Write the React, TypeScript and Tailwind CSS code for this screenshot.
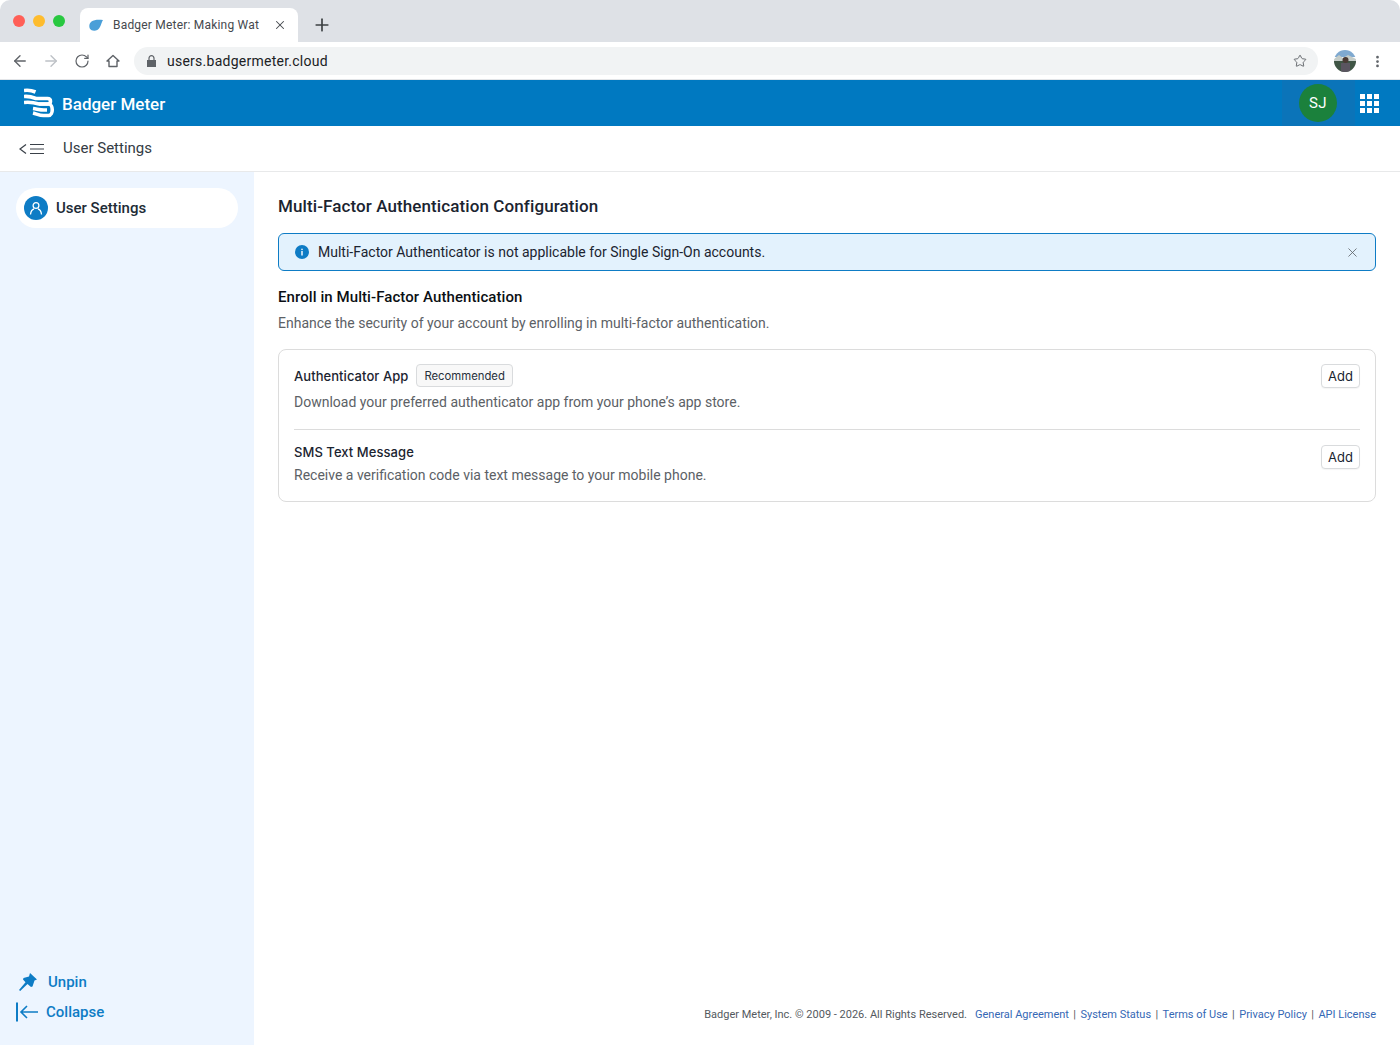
import { Star, ArrowLeft, ArrowRight, RotateCw, X, Plus, EllipsisVertical } from "lucide-react";

const roboto = "font-['Roboto',sans-serif]";
const inter = "font-['Inter',sans-serif]";

function BadgerLogo() {
  return (
    <svg width="31" height="31" viewBox="0 0 31 31" fill="none" stroke="white" strokeWidth="3.600">
      <path d="M0 2.500C4 2 8 2.500 11.500 4" />
      <path d="M0 8.500C5 8 8 9 12 10.500H23.500C27.500 10.500 27.500 16 23.500 16H15" />
      <path d="M0 14.500C5 14 10 14.500 15 16H24.500C29.500 16 29.500 27.500 24.500 27.500H19.500C15.500 27.500 13 26 9 25" />
      <path d="M9 20.500C13 21 16 22 20 22H23" />
    </svg>
  );
}

function BrowserChrome() {
  return (
    <div className={`h-20 shrink-0 flex flex-col ${roboto}`}>
      <div className="h-[42px] bg-[#dee1e6] rounded-t-[10px] flex items-end">
        <div className="flex gap-2 pl-[13px] self-start pt-[15px]">
          <span className="w-3 h-3 rounded-full bg-[#ff5f57]" />
          <span className="w-3 h-3 rounded-full bg-[#febc2e]" />
          <span className="w-3 h-3 rounded-full bg-[#28c840]" />
        </div>
        <div className="ml-[15px] w-[218px] h-[34px] bg-white rounded-t-[8px] flex items-center pl-[9px] pr-[11px]">
          <svg width="14" height="12" viewBox="0 0 14 12" fill="#4a9fd8">
            <path d="M14 1C10 .3 5 .5 2.500 2.500.5 4-.3 7 .8 9.500c1.500 2.500 5 2.800 7.500 1.500C11.500 9.300 12 4.500 14 1z" />
          </svg>
          <span className="ml-[10px] flex-1 text-[12px] tracking-[0.2px] text-[#45494e] whitespace-nowrap">Badger Meter: Making Wat</span>
          <X size={14} strokeWidth={1.8} className="text-[#45494e]" />
        </div>
        <Plus size={20} strokeWidth={2} className="ml-[14px] mb-[7px] text-[#3c4043]" />
      </div>
      <div className="h-[38px] pt-px bg-white border-b border-[#e3e5e8] flex items-center">
        <div className="flex items-center pl-[11px] gap-[13px] text-[#5f6368]">
          <ArrowLeft size={18} strokeWidth={1.8} />
          <ArrowRight size={18} strokeWidth={1.8} className="text-[#bdc1c6]" />
          <RotateCw size={16} strokeWidth={1.8} className="mx-px" />
          <svg width="16" height="16" viewBox="0 0 16 16" fill="none" stroke="currentColor" strokeWidth="1.400" className="mx-px">
            <path d="M8 2.500 2 8h2v5.500h8V8h2z" strokeLinejoin="round" />
          </svg>
        </div>
        <div className="ml-[12px] w-[1184px] h-7 rounded-full bg-[#f1f3f4] flex items-center pl-[13px] pr-[11px]">
          <svg width="9" height="12" viewBox="0 0 9 12" fill="#5f6368">
            <path d="M0 5h9v7H0z" />
            <path d="M2 5V3.200a2.500 2.500 0 0 1 5 0V5" fill="none" stroke="#5f6368" strokeWidth="1.200" />
          </svg>
          <span className="ml-[11px] flex-1 text-[14px] tracking-[0.25px] text-[#202124]">users.badgermeter.cloud</span>
          <Star size={14} strokeWidth={1.6} className="text-[#5f6368]" />
        </div>
        <svg width="22" height="22" viewBox="0 0 22 22" className="ml-[16px] shrink-0">
          <defs>
            <clipPath id="avatar-clip"><circle cx="11" cy="11" r="11" /></clipPath>
          </defs>
          <g clipPath="url(#avatar-clip)">
            <rect width="22" height="7" fill="#7fa9d0" />
            <path d="M0 9 5 5l4 3 5-3 8 4v4H0z" fill="#c4ccc8" />
            <rect y="11" width="22" height="11" fill="#3f5545" />
            <circle cx="11.500" cy="10" r="3" fill="#4a3a34" />
            <rect x="7" y="13" width="9" height="9" fill="#5a5560" />
          </g>
        </svg>
        <EllipsisVertical size={15} strokeWidth={2.4} className="ml-[13.500px] text-[#5f6368]" />
      </div>
    </div>
  );
}

function AppHeader() {
  return (
    <header className={`h-[46px] shrink-0 bg-[#0079c1] flex items-center pl-6 ${roboto}`}>
      <BadgerLogo />
      <span className="ml-[7px] mt-[3px] text-[17px] font-medium text-white">Badger Meter</span>
      <div className="ml-auto h-full w-[73px] pr-px bg-[#0b74b9] flex items-center justify-center">
        <div className="w-[38px] h-[38px] rounded-full bg-[#1b813c] flex items-center justify-center text-[15px] text-white tracking-[0.3px]">SJ</div>
      </div>
      <div className="grid grid-cols-3 gap-[2px] ml-[5px] mr-[21px]">
        {Array.from({ length: 9 }).map((_, i) => (
          <span key={i} className="w-[5px] h-[5px] bg-white" />
        ))}
      </div>
    </header>
  );
}

function Sidebar() {
  return (
    <aside className={`w-[254px] shrink-0 bg-[#edf5ff] flex flex-col justify-between pt-4 pb-[18px] pl-4 pr-4 ${roboto}`}>
      <div className="h-10 rounded-full bg-white flex items-center pl-2">
        <div className="w-6 h-6 rounded-full bg-[#0e7cc5] flex items-center justify-center">
          <svg width="14" height="14" viewBox="0 0 14 14" fill="none" stroke="white" strokeWidth="1.300">
            <circle cx="7" cy="4.500" r="2.900" />
            <path d="M1.500 13.500c.3-3 1.500-5 3.500-5.500M12.500 13.500c-.3-3-1.500-5-3.500-5.500" />
          </svg>
        </div>
        <span className="ml-2 text-[15px] font-medium text-[#212b36]">User Settings</span>
      </div>
      <div className="flex flex-col text-[15px] font-medium text-[#0e7cc5]">
        <div className="h-[30px] flex items-center pl-[3px]">
          <svg width="18" height="18" viewBox="0 0 18 18" fill="#0e7cc5">
            <path d="M11 0 18 6.500 15.500 7.500 13.500 13.500 12 14 8.500 11 1.200 18 0 17 6.500 9.300 4 6.500 4.500 5 10 3.500z" />
          </svg>
          <span className="ml-[11px]">Unpin</span>
        </div>
        <div className="h-[30px] flex items-center">
          <svg width="23" height="20" viewBox="0 0 23 20" fill="none" stroke="#0e7cc5">
            <path d="M1 0.500v19" strokeWidth="2" />
            <path d="M22 10H5.500M11 4 5 10l6 6" strokeWidth="1.600" />
          </svg>
          <span className="ml-[7px]">Collapse</span>
        </div>
      </div>
    </aside>
  );
}

function MethodRow({ title, desc, badge, className }: { title: string; desc: string; badge?: string; className: string }) {
  return (
    <div className={`flex justify-between ${className}`}>
      <div>
        <div className="h-[23px] flex items-center">
          <span className={`text-[13px] tracking-[0.06px] font-medium text-[#1b2430] ${inter}`}>{title}</span>
          {badge && (
            <span className={`ml-2 h-[23px] px-[7px] flex items-center rounded-[4px] border border-[#d9dbdd] bg-[#f8f8f8] text-[11.300px] text-[#27303b] ${inter}`}>
              {badge}
            </span>
          )}
        </div>
        <p className={`text-[14px] text-[#5c6166] ${roboto}`}>{desc}</p>
      </div>
      <button className={`w-[39px] h-6 rounded-[4px] border border-[#d9dbdd] bg-white text-[13px] leading-none text-[#1b2430] shadow-[0_1px_1px_rgba(0,0,0,0.04)] ${inter}`}>
        Add
      </button>
    </div>
  );
}

function Footer() {
  const links = ["General Agreement", "System Status", "Terms of Use", "Privacy Policy", "API License"];
  return (
    <footer className={`flex justify-end items-center text-[11px] text-[#54595e] ${roboto}`}>
      <span>Badger Meter, Inc. © 2009 - 2026. All Rights Reserved.</span>
      <span className="ml-2 flex items-center">
        {links.map((l, i) => (
          <span key={l} className="flex items-center">
            {i > 0 && <span className="mx-[4.400px]">|</span>}
            <a className="text-[#3568b5]">{l}</a>
          </span>
        ))}
      </span>
    </footer>
  );
}

function Main() {
  return (
    <main className="flex-1 flex flex-col justify-between pl-6 pr-6 pt-[24px] pb-[22px] min-w-0">
      <div>
        <h1 className={`text-[17px] tracking-[0.1px] leading-5 font-medium text-[#1b2430] ${roboto}`}>Multi-Factor Authentication Configuration</h1>
        <div className="mt-[17px] h-[38px] rounded-[6px] border border-[#0e7cc5] bg-[#e3f2fd] flex items-center pl-4 pr-[15px]">
          <svg width="14" height="14" viewBox="0 0 14 14">
            <circle cx="7" cy="7" r="7" fill="#0e7cc5" />
            <rect x="6.300" y="6" width="1.400" height="4.500" fill="white" />
            <rect x="6.300" y="3.700" width="1.400" height="1.400" fill="white" />
          </svg>
          <span className={`ml-[9px] flex-1 text-[14px] text-[#1b2430] ${roboto}`}>
            Multi-Factor Authenticator is not applicable for Single Sign-On accounts.
          </span>
          <X size={15} strokeWidth={1.3} className="text-[#5c6166]" />
        </div>
        <h2 className={`mt-[16px] text-[15px] tracking-[0.08px] leading-5 font-medium text-[#0b0f14] ${roboto}`}>Enroll in Multi-Factor Authentication</h2>
        <p className={`mt-[6px] text-[14px] leading-5 text-[#5c6166] ${roboto}`}>
          Enhance the security of your account by enrolling in multi-factor authentication.
        </p>
        <div className="mt-[16px] h-[153px] rounded-[8px] border border-[#dcdcdc] px-[15px]">
          <MethodRow
            title="Authenticator App"
            desc="Download your preferred authenticator app from your phone’s app store."
            badge="Recommended"
            className="pt-[14px] pb-[17px] leading-[28px] h-[80px] border-b border-[#dcdcdc] [&_p]:mt-px"
          />
          <MethodRow
            title="SMS Text Message"
            desc="Receive a verification code via text message to your mobile phone."
            className="pt-[11px] leading-[23px] [&_button]:mt-[4px]"
          />
        </div>
      </div>
      <Footer />
    </main>
  );
}

export default function App() {
  return (
    <div className="h-[1045px] flex flex-col bg-white overflow-hidden">
      <BrowserChrome />
      <AppHeader />
      <div className={`h-[46px] shrink-0 border-b border-[#e8e9ea] flex items-center pl-[19px] ${roboto}`}>
        <svg width="26" height="12" viewBox="0 0 26 12" fill="none" stroke="#3a4149" strokeWidth="1.200">
          <path d="M7 1.500 1 6l6 4.500M11 1.500h14M11 6h14M11 10.500h14" />
        </svg>
        <span className="ml-[18px] text-[15px] text-[#333b44]">User Settings</span>
      </div>
      <div className="flex-1 flex min-h-0">
        <Sidebar />
        <Main />
      </div>
    </div>
  );
}
